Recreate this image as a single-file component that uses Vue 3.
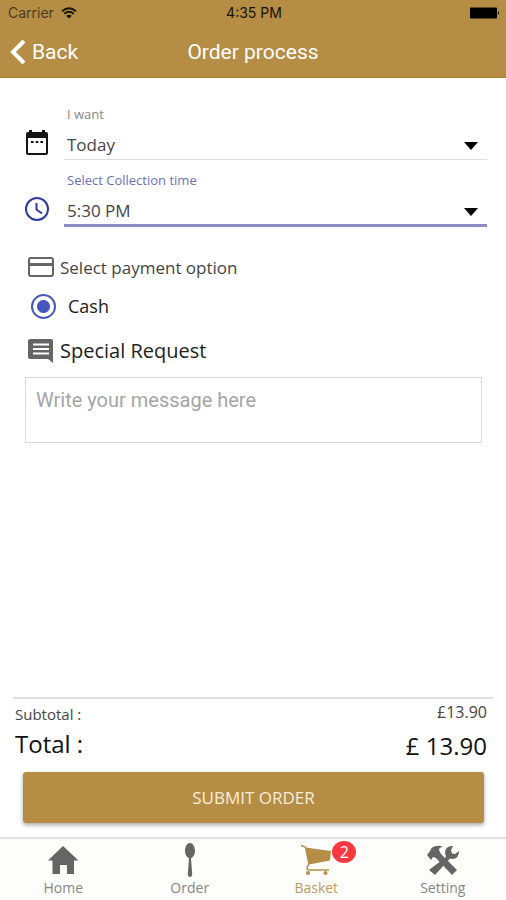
<script setup>
import { ref } from 'vue'

const day = ref('Today')
const time = ref('5:30 PM')
const payment = ref('cash')
const message = ref('')
const basketCount = ref(2)
</script>

<template>
  <div class="screen">
    <header class="top">
      <div class="status">
        <div class="carrier">
          <span>Carrier</span>
          <svg width="16" height="12" viewBox="0 0 16 12" fill="none" stroke="#17120a" stroke-width="1.8">
            <path d="M1 4.200Q8-1.600 15 4.200M3.300 6.700Q8 2.900 12.700 6.700" />
            <path d="M5.200 8.700Q8 6.600 10.800 8.700L8 11.600Z" fill="#17120a" stroke="none" />
          </svg>
        </div>
        <span class="clock">4:35 PM</span>
        <svg class="battery" width="30" height="12" viewBox="0 0 30 12">
          <rect width="27" height="11" y=".5" rx="1" />
          <path d="M28 4q2 2 0 4z" />
        </svg>
      </div>
      <div class="nav">
        <a class="back" href="#">
          <svg width="16" height="26" viewBox="0 0 16 26" fill="none" stroke="#fff" stroke-width="4">
            <path d="M14 2L3 13L14 24" />
          </svg>
          <span>Back</span>
        </a>
        <h1>Order process</h1>
      </div>
    </header>

    <main class="content">
      <div class="field">
        <svg class="lead" width="24" height="26" viewBox="0 0 24 26">
          <path fill="#151515" fill-rule="evenodd" d="M4 0h3v2h10V0h3v2h1q2 0 2 2v19q0 2-2 2H3q-2 0-2-2V4q0-2 2-2h1zM3 8v15h18V8z" />
          <path fill="#151515" d="M6 11h2.600v2H6zM10.700 11h2.600v2h-2.600zM15.400 11H18v2h-2.600z" />
        </svg>
        <div class="control">
          <label for="day">I want</label>
          <select id="day" v-model="day">
            <option>Today</option>
            <option>Tomorrow</option>
          </select>
          <svg class="arrow" width="14" height="8" viewBox="0 0 14 8"><path d="M0 0h14L7 8z" /></svg>
        </div>
      </div>
      <div class="field active">
        <svg class="lead" width="24" height="26" viewBox="0 0 24 26" fill="none" stroke="#2c3aa6" stroke-width="2">
          <circle cx="12" cy="13" r="11" />
          <path d="M11.500 7v6.500L17 17.500" />
        </svg>
        <div class="control">
          <label for="time">Select Collection time</label>
          <select id="time" v-model="time">
            <option>5:30 PM</option>
            <option>6:00 PM</option>
          </select>
          <svg class="arrow" width="14" height="8" viewBox="0 0 14 8"><path d="M0 0h14L7 8z" /></svg>
        </div>
      </div>

      <h2 class="heading">
        <svg width="26" height="20" viewBox="0 0 26 20" fill="none" stroke="#656565" stroke-width="2">
          <rect x="1" y="1" width="24" height="18" rx="2" />
          <path d="M2 7.500h22" stroke-width="3" />
        </svg>
        <span>Select payment option</span>
      </h2>
      <label class="choice">
        <input v-model="payment" type="radio" name="payment" value="cash">
        <span>Cash</span>
      </label>

      <label class="heading request" for="message">
        <svg width="26" height="24" viewBox="0 0 26 24">
          <path fill="#656565" fill-rule="evenodd" d="M2 0h21q2 0 2 2v22l-5-4H2q-2 0-2-2V2q0-2 2-2zM5 4.500v2h16v-2zM5 9v2h16V9zM5 13.500v2h16v-2z" />
        </svg>
        <span>Special Request</span>
      </label>
      <textarea id="message" v-model="message" placeholder="Write your message here"></textarea>
    </main>

    <section class="summary">
      <div class="line"><span class="caption">Subtotal :</span><span class="amount">£13.90</span></div>
      <div class="line total"><span class="caption">Total :</span><span class="amount">£ 13.90</span></div>
      <button type="button">SUBMIT ORDER</button>
    </section>

    <nav class="tabs">
      <a href="#">
        <svg width="36" height="36" viewBox="0 0 36 36" fill="#656565">
          <path d="M18 3L33.500 17.500H29V31H22V22H15V31H7.500V17.500H3z" />
        </svg>
        <span>Home</span>
      </a>
      <a href="#">
        <svg width="36" height="36" viewBox="0 0 36 36" fill="#656565">
          <path d="M18 0c-3.200 0-5 4-5 8 0 4 2 6 4 7.200L15.800 31q0 3 2.200 3t2.200-3L19 15.200c2-1.200 4-3.200 4-7.200 0-4-1.800-8-5-8z" />
        </svg>
        <span>Order</span>
      </a>
      <a class="current" href="#">
        <svg width="36" height="36" viewBox="0 0 36 36">
          <path fill="#b58d45" d="M7.500 4.500L33 8l-1 9.500L11 21.500z" />
          <path fill="none" stroke="#b58d45" stroke-width="1.500" d="M3 2.500l4.500 1.500L11 21Q7 26.500 11 27H31" />
          <circle cx="10" cy="30" r="2" fill="#b58d45" />
          <circle cx="27.500" cy="30" r="2" fill="#b58d45" />
        </svg>
        <b class="badge">{{ basketCount }}</b>
        <span>Basket</span>
      </a>
      <a href="#">
        <svg width="36" height="36" viewBox="0 0 36 36" fill="#656565">
          <path d="M2 12l3-4q1-4 6-5 4-1 7 1-4 0-4 3l2 4 16 16-5 5L11 15l-3-1-2 3z" />
          <path d="M21 14l-1-4q0-6 6-7h2l-2 4 1 3.500 3 .5 4-3q0 7-6 8l-3-.5L10 32l-6-5z" />
        </svg>
        <span>Setting</span>
      </a>
    </nav>
  </div>
</template>

<style>
body {
  margin: 0;
  background: #fff;
}
</style>

<style scoped>
* {
  box-sizing: border-box;
}

.screen {
  display: flex;
  flex-direction: column;
  min-height: 100vh;
  font-family: "Open Sans", "Noto Sans", sans-serif;
  color: #444;
}

svg {
  flex: none;
  display: block;
}

a {
  color: inherit;
  text-decoration: none;
}

.top {
  background: #b58d45;
  border-bottom: 1px solid #a9802f;
}

.status {
  display: grid;
  grid-template-columns: 1fr auto 1fr;
  align-items: center;
  height: 26px;
  padding: 0 6px 0 8px;
  font: 14px/26px Inter, sans-serif;
  color: #17120a;
}

.carrier {
  display: flex;
  align-items: center;
  gap: 7px;
  color: #4a3b1f;
}

.battery {
  justify-self: end;
}

.nav {
  display: grid;
  grid-template-columns: 1fr auto 1fr;
  align-items: center;
  height: 51px;
  padding: 0 10px;
  font: 21px/50px Roboto, sans-serif;
  color: #fff;
}

.back {
  display: flex;
  align-items: center;
  gap: 6px;
}

h1 {
  margin: 0;
  font: inherit;
}

.content {
  flex: 1;
  padding: 25px 19px 20px 25px;
}

.field {
  display: flex;
  gap: 15px;
  height: 66px;
}

.lead {
  margin-top: 27px;
}

.control {
  position: relative;
  flex: 1;
  height: 66px;
}

.control label {
  display: block;
  padding-left: 3px;
  font-size: 13px;
  line-height: 22px;
  color: #868686;
}

select {
  display: block;
  width: 100%;
  height: 35px;
  padding: 4px 30px 0 3px;
  border: 0;
  border-bottom: 1px solid #ddd;
  border-radius: 0;
  appearance: none;
  background: none;
  font: 17px "Open Sans", sans-serif;
  color: #444;
}

.active .control label {
  color: #6970bd;
}

.active select {
  height: 36px;
  padding-top: 5px;
  border-bottom: 3px solid #8b8cc6;
}

.arrow {
  position: absolute;
  right: 9px;
  top: 39px;
  pointer-events: none;
}

.heading {
  display: flex;
  align-items: center;
  gap: 6px;
  height: 24px;
  margin: 20px 0 0 3px;
  font-size: 17px;
  font-weight: 400;
}

.choice {
  display: flex;
  align-items: center;
  gap: 12px;
  height: 26px;
  margin: 14px 0 0 6px;
  font-size: 18px;
  color: #222;
}

.choice input {
  flex: none;
  width: 25px;
  height: 25px;
  margin: 0;
  appearance: none;
  border: 2px solid #4658bd;
  border-radius: 50%;
  background: radial-gradient(circle, #4658bd 6px, transparent 7px);
}

.request {
  font-size: 20px;
  line-height: 22px;
  color: #222;
}

textarea {
  display: block;
  width: calc(100% - 5px);
  height: 66px;
  margin-top: 14px;
  padding: 10px;
  border: 1px solid #d8d8d8;
  resize: none;
  background: #fff;
  font: 20px/24px Roboto, sans-serif;
  color: #333;
}

textarea::placeholder {
  color: #a5a5a5;
}

.summary {
  margin: 0 13px;
  border-top: 2px solid #ddd;
}

.line {
  display: flex;
  justify-content: space-between;
  padding: 0 6px 0 2px;
  font-size: 15px;
  line-height: 30px;
}

.line .amount {
  font-size: 16px;
  line-height: 26px;
}

.total .caption,
.total .amount {
  font-size: 24px;
  color: #111;
}

.total .amount {
  padding-top: 4px;
}

.summary button {
  display: block;
  width: calc(100% - 19px);
  height: 51px;
  margin: 13px 9px 14px 10px;
  border: 0;
  border-radius: 3px;
  background: #b58d45;
  box-shadow: 0 2px 4px rgba(0, 0, 0, 0.35);
  font: 17px "Open Sans", sans-serif;
  color: #f7edd9;
}

.tabs {
  display: grid;
  grid-template-columns: repeat(4, 1fr);
  height: 63px;
  padding-top: 4px;
  border-top: 2px solid #e2e2e2;
  background: #fdfdfb;
  color: #858585;
}

.tabs a {
  position: relative;
  display: flex;
  flex-direction: column;
  align-items: center;
  font-size: 14px;
  line-height: 18px;
}

.tabs .current {
  color: #c39b5c;
}

.badge {
  position: absolute;
  top: -2px;
  left: calc(50% + 16px);
  width: 24px;
  height: 22px;
  border-radius: 50%;
  background: #f9393f;
  font-size: 16px;
  font-weight: 400;
  line-height: 22px;
  text-align: center;
  color: #fff;
}
</style>
